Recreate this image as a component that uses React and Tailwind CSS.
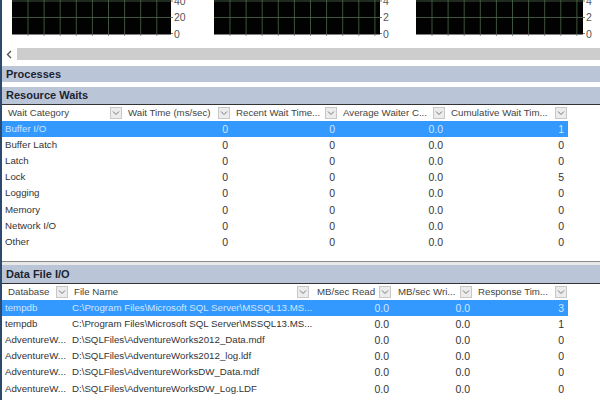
import React from "react";

function Chart({ width, labels }) {
  const vs = [];
  for (let x = 16; x < width; x += 16.1) vs.push(x);
  const font = "Liberation Sans, sans-serif";
  return (
    <svg width={width + 22} height={42} className="block shrink-0">
      <rect x="0" y="0" width={width} height="34.5" fill="#020202" />
      {vs.map((x, i) => (
        <g key={i}>
          <line x1={x} x2={x} y1="0" y2="34.5" stroke="#4c6a4c" strokeWidth="0.8" />
          <line x1={x} x2={x} y1="34.5" y2="36" stroke="#777" strokeWidth="0.8" />
        </g>
      ))}
      <line x1="0" x2={width} y1="1" y2="1" stroke="#4c6a4c" strokeWidth="0.8" />
      <line x1="0" x2={width} y1="17.5" y2="17.5" stroke="#4c6a4c" strokeWidth="0.8" />
      <line x1={width} x2={width + 2} y1="1" y2="1" stroke="#777" />
      <line x1={width} x2={width + 2} y1="17.5" y2="17.5" stroke="#777" />
      <line x1={width} x2={width + 2} y1="33.5" y2="33.5" stroke="#777" />
      <text x={width + 3} y="5" fontSize="10.5" fill="#555" fontFamily={font}>{labels[0]}</text>
      <text x={width + 3} y="21" fontSize="10.5" fill="#555" fontFamily={font}>{labels[1]}</text>
      <text x={width + 3} y="37.5" fontSize="10.5" fill="#555" fontFamily={font}>0</text>
    </svg>
  );
}

function Chevron() {
  return (
    <span className="flex h-[12px] w-[12px] shrink-0 items-center justify-center border border-[#c8c8c8] bg-[#ececec]">
      <svg width="8" height="6" viewBox="0 0 8 6">
        <path d="M1 1.5 L4 4.5 L7 1.5" fill="none" stroke="#777" strokeWidth="1" />
      </svg>
    </span>
  );
}

function Band({ children, className }) {
  return (
    <div className={"flex items-center bg-[#bac6d8] pl-[4px] text-[11px] font-bold text-[#1c2433] " + className}>
      {children}
    </div>
  );
}

function HeaderCell({ label, pad }) {
  return (
    <div className={"flex h-full items-center justify-between " + pad}>
      <span className="whitespace-nowrap">{label}</span>
      <Chevron />
    </div>
  );
}

const waitCols = "grid grid-cols-[123px_108px_107px_108px_120px]";
const fileCols = "grid grid-cols-[69px_241px_82px_81px_93px]";

const waits = [
  ["Buffer I/O", "0", "0", "0.0", "1"],
  ["Buffer Latch", "0", "0", "0.0", "0"],
  ["Latch", "0", "0", "0.0", "0"],
  ["Lock", "0", "0", "0.0", "5"],
  ["Logging", "0", "0", "0.0", "0"],
  ["Memory", "0", "0", "0.0", "0"],
  ["Network I/O", "0", "0", "0.0", "0"],
  ["Other", "0", "0", "0.0", "0"],
];

const files = [
  ["tempdb", "C:\\Program Files\\Microsoft SQL Server\\MSSQL13.MS...", "0.0", "0.0", "3"],
  ["tempdb", "C:\\Program Files\\Microsoft SQL Server\\MSSQL13.MS...", "0.0", "0.0", "1"],
  ["AdventureW...", "D:\\SQLFiles\\AdventureWorks2012_Data.mdf", "0.0", "0.0", "0"],
  ["AdventureW...", "D:\\SQLFiles\\AdventureWorks2012_log.ldf", "0.0", "0.0", "0"],
  ["AdventureW...", "D:\\SQLFiles\\AdventureWorksDW_Data.mdf", "0.0", "0.0", "0"],
  ["AdventureW...", "D:\\SQLFiles\\AdventureWorksDW_Log.LDF", "0.0", "0.0", "0"],
];

export default function App() {
  return (
    <div className="flex h-[400px] w-[600px] overflow-hidden bg-white font-['Liberation_Sans',sans-serif] text-[9.7px] leading-[14px] text-[#333]">
      <div className="w-[2px] shrink-0 bg-[#2c4a70]" />
      <div className="min-w-0 flex-1">
        <div className="flex h-[48px] pl-[10px]">
          <div className="w-[202px] shrink-0"><Chart width={159} labels={["40", "20"]} /></div>
          <div className="w-[202px] shrink-0"><Chart width={166} labels={["4", "2"]} /></div>
          <Chart width={167} labels={["4", "2"]} />
        </div>
        <div className="flex h-[12px] items-center">
          <div className="flex w-[15px] justify-center">
            <svg width="7" height="9" viewBox="0 0 7 9">
              <path d="M5 1 L1.5 4.5 L5 8" fill="none" stroke="#555" strokeWidth="1.4" />
            </svg>
          </div>
          <div className="h-full flex-1 bg-[#cdcdcd]" />
        </div>
        <Band className="mt-[6px] h-[16px]">Processes</Band>
        <Band className="mt-[5px] h-[17px] pb-[1px]">Resource Waits</Band>
        <div className="border-t border-[#333]">
          <div className={waitCols + " h-[16px] w-[566px] pb-[1px] text-[#444]"}>
            <HeaderCell label="Wait Category" pad="pl-[6px] pr-[3px]" />
            <HeaderCell label="Wait Time (ms/sec)" pad="pl-[3px] pr-[3px]" />
            <HeaderCell label="Recent Wait Time..." pad="pl-[3px] pr-[3px]" />
            <HeaderCell label="Average Waiter C..." pad="pl-[3px] pr-[3px]" />
            <HeaderCell label="Cumulative Wait Tim..." pad="pl-[3px] pr-[1px]" />
          </div>
          <div className="h-[140px]">
            {waits.map((r, i) => (
              <div key={i} className={waitCols + " h-[16.1px] w-[566px] items-center " + (i === 0 ? "bg-[#3399ff] text-[#cfe6ff]" : "")}>
                <span className="pl-[3px]">{r[0]}</span>
                <span className="pr-[5px] text-right text-[10.5px]">{r[1]}</span>
                <span className="pr-[5px] text-right text-[10.5px]">{r[2]}</span>
                <span className="pr-[5px] text-right text-[10.5px]">{r[3]}</span>
                <span className="pr-[4px] text-right text-[10.5px]">{r[4]}</span>
              </div>
            ))}
          </div>
        </div>
        <div className="h-[4px] border-t border-[#8a8a8a] bg-[#e8e8e8]" />
        <Band className="h-[18px]">Data File I/O</Band>
        <div className="border-t border-[#333]">
          <div className={fileCols + " h-[16px] w-[566px] pb-[1px] text-[#444]"}>
            <HeaderCell label="Database" pad="pl-[6px] pr-[3px]" />
            <HeaderCell label="File Name" pad="pl-[3px] pr-[3px]" />
            <HeaderCell label="MB/sec Read" pad="pl-[5px] pr-[3px]" />
            <HeaderCell label="MB/sec Wri..." pad="pl-[4px] pr-[3px]" />
            <HeaderCell label="Response Tim..." pad="pl-[3px] pr-[1px]" />
          </div>
          {files.map((r, i) => (
            <div key={i} className={fileCols + " h-[16.1px] w-[566px] items-center " + (i === 0 ? "bg-[#3399ff] text-[#cfe6ff]" : "")}>
              <span className="whitespace-nowrap pl-[3px]">{r[0]}</span>
              <span className="whitespace-nowrap pl-[1px]">{r[1]}</span>
              <span className="pr-[5px] text-right text-[10.5px]">{r[2]}</span>
              <span className="pr-[5px] text-right text-[10.5px]">{r[3]}</span>
              <span className="pr-[4px] text-right text-[10.5px]">{r[4]}</span>
            </div>
          ))}
        </div>
      </div>
    </div>
  );
}
